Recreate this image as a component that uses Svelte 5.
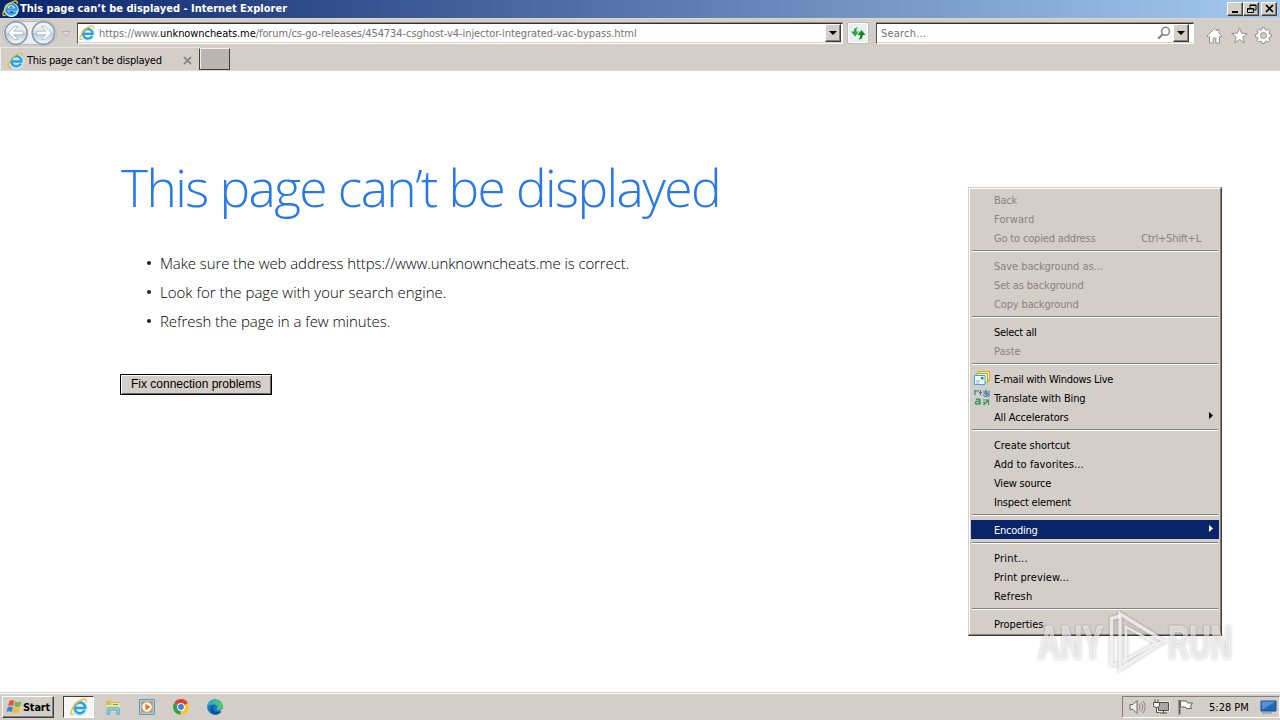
<script lang="ts">
  interface MenuItem {
    label: string;
    tracking?: number;
    disabled?: boolean;
    shortcut?: string;
    icon?: 'mail' | 'translate';
    submenu?: boolean;
    active?: boolean;
  }

  // tracking is extra letter spacing in px
  const groups: MenuItem[][] = [
    [
      { label: 'Back', tracking: -0.25, disabled: true },
      { label: 'Forward', tracking: 0.1, disabled: true },
      { label: 'Go to copied address', tracking: -0.17, disabled: true, shortcut: 'Ctrl+Shift+L' },
    ],
    [
      { label: 'Save background as...', tracking: -0.04, disabled: true },
      { label: 'Set as background', tracking: -0.15, disabled: true },
      { label: 'Copy background', tracking: -0.15, disabled: true },
    ],
    [{ label: 'Select all', tracking: -0.28 }, { label: 'Paste', disabled: true }],
    [
      { label: 'E-mail with Windows Live', tracking: -0.28, icon: 'mail' },
      { label: 'Translate with Bing', tracking: -0.14, icon: 'translate' },
      { label: 'All Accelerators', tracking: -0.16, submenu: true },
    ],
    [
      { label: 'Create shortcut', tracking: -0.06 },
      { label: 'Add to favorites...', tracking: 0.08 },
      { label: 'View source', tracking: -0.2 },
      { label: 'Inspect element', tracking: -0.2 },
    ],
    [{ label: 'Encoding', tracking: -0.25, submenu: true, active: true }],
    [
      { label: 'Print...', tracking: 0.2 },
      { label: 'Print preview...', tracking: 0.1 },
      { label: 'Refresh', tracking: 0.15 },
    ],
    [{ label: 'Properties', tracking: -0.05 }],
  ];

  const tips = [
    { text: 'Make sure the web address https://www.unknowncheats.me is correct.', tracking: -0.1 },
    { text: 'Look for the page with your search engine.', tracking: 0 },
    { text: 'Refresh the page in a few minutes.', tracking: -0.05 },
  ];

  const title = 'This page can’t be displayed';
</script>

{#snippet ie(size: number)}
  <svg width={size} height={size} viewBox="0 0 16 16">
    <path d="M13.6 10.6A5 5 0 1 1 13.8 8.9H5" fill="none" stroke="#c9effc" stroke-width="3.8" />
    <path d="M13.1 10.9A4.800 4.800 0 1 1 13.600 8.900H5" fill="none" stroke="#2d9fe0" stroke-width="2.200" />
    <path d="M3.400 14C1 15.600.2 14 1.500 10.900 3.300 6.600 7.500 2.500 11.600 1.100c2.300-.7 3.200.6 2.500 2.600" fill="none" stroke="#eebd2e" stroke-width="1.300" />
  </svg>
{/snippet}

{#snippet drop()}
  <button class="drop" aria-label="Show list">
    <svg width="8" height="4" viewBox="0 0 8 4"><path d="M0 0h8L4 4z" fill="#000" /></svg>
  </button>
{/snippet}

<div class="desktop">
  <header class="titlebar">
    {@render ie(17)}
    <span class="caption">{title} - Internet Explorer</span>
    <div class="window-buttons">
      <button aria-label="Minimize"><svg width="11" height="10"><path d="M2 8h6" stroke="#000" stroke-width="2" /></svg></button>
      <button aria-label="Restore"><svg width="11" height="10"><path d="M4 4V1h6v5H8M4 1.5h6M1.5 4.5h6v4h-6zM1 5h7" fill="none" stroke="#000" /></svg></button>
      <button class="close" aria-label="Close"><svg width="11" height="10"><path d="M2 1l7 7M9 1L2 8" stroke="#000" stroke-width="1.7" /></svg></button>
    </div>
  </header>

  <div class="toolbar">
    <svg width="77" height="28" viewBox="0 0 77 28">
      <defs>
        <linearGradient id="glass" x2="0" y2="1">
          <stop stop-color="#f9fbfc" />
          <stop offset=".48" stop-color="#dce4eb" />
          <stop offset=".52" stop-color="#b7c9d9" />
          <stop offset="1" stop-color="#f4fdff" />
        </linearGradient>
      </defs>
      <path d="M15 1.5c8 1.500 21 1.500 29 0a12.5 12.5 0 0 1 0 25c-8-1.500-21-1.500-29 0a12.5 12.5 0 0 1 0-25z" fill="#eceeef" stroke="#b5b5b6" />
      <circle cx="16" cy="14" r="11.2" fill="url(#glass)" stroke="#8799aa" stroke-width="1.5" />
      <circle cx="43.5" cy="14" r="11.2" fill="url(#glass)" stroke="#8799aa" stroke-width="1.5" />
      <path d="M8 14l6.500-6.500H18l-4.300 4.700h9.300v3.600h-9.300l4.300 4.700h-3.500z" fill="#fff" stroke="#9cabb9" stroke-width=".7" />
      <path d="M51.500 14L45 7.500h-3.500l4.300 4.700h-9.300v3.600h9.300l-4.300 4.700H45z" fill="#fff" stroke="#9cabb9" stroke-width=".7" />
      <path d="M62 12.5h8l-4 4.5z" fill="#e1dedb" stroke="#aaa5a1" stroke-width=".8" />
    </svg>
    <div class="field address">
      {@render ie(16)}
      <span class="url">https://www.<b>unknowncheats.me</b>/forum/cs-go-releases/454734-csghost-v4-injector-integrated-vac-bypass.html</span>
      {@render drop()}
    </div>
    <button class="reload" aria-label="Refresh">
      <svg width="16" height="15" viewBox="0 0 16 15">
        <path d="M8 1.500C5 1.500 3.800 3 3.800 5.500H1l4 5 4-5H6.300c0-2 .4-2.800 1.700-4z" fill="#2fa63a" />
        <path d="M8.500 13.500c3 0 4.200-1.500 4.200-4.500h2.800l-4-5-4 5h2.700c0 2-.4 3.300-1.700 4.500z" fill="#168522" />
      </svg>
    </button>
    <div class="field search">
      <span class="hint">Search...</span>
      <svg class="lens" width="14" height="14" viewBox="0 0 14 14">
        <circle cx="8.5" cy="5.3" r="4" fill="none" stroke="#858585" stroke-width="1.6" />
        <path d="M5.4 8.4L1.2 12.7" stroke="#858585" stroke-width="2.2" />
      </svg>
      {@render drop()}
    </div>
    <div class="tools">
      <svg width="17" height="17" viewBox="0 0 17 17">
        <path d="M1 9l7.5-7.5L11 4V2.5h2V6l3 3-1.2 1.2-1.3-1V16h-3.700v-5H7.200v5H3.500V9.200l-1.300 1z" fill="#fff" stroke="#969493" />
      </svg>
      <svg width="17" height="17" viewBox="0 0 17 17">
        <path d="M8.5.8l2.1 5.400 5.700.3-4.500 3.600 1.600 5.700-4.900-3.200-4.900 3.200 1.600-5.700L.7 6.500l5.700-.3z" fill="#fff" stroke="#969493" />
      </svg>
      <svg width="17" height="17" viewBox="0 0 17 17">
        <path d="M7.2.7h2.6l.4 2 1.3.6 1.9-1.2L15 3.8l-1.1 1.8.5 1.4 2 .4v2.5l-2 .4-.6 1.4 1.2 1.7-1.8 1.8-1.8-1.2-1.3.6-.4 1.9H7.2l-.4-1.9-1.4-.6-1.7 1.2L2 13.4l1.1-1.7-.6-1.4-2-.4V7.4l2-.4.6-1.4L2 3.8l1.7-1.7 1.7 1.2 1.4-.6z" fill="#fff" stroke="#8f8d8c" />
        <circle cx="8.5" cy="8.5" r="3" fill="#d4cec9" stroke="#969493" />
      </svg>
    </div>
  </div>

  <div class="tabs">
    <div class="tab">
      {@render ie(17)}
      <span class="tab-title">{title}</span>
      <svg class="tab-close" width="9" height="9" viewBox="0 0 9 9"><path d="M1 1l7 7M8 1L1 8" stroke="#8d8884" stroke-width="1.8" /></svg>
    </div>
    <button class="new-tab" aria-label="New tab"></button>
  </div>

  <main>
    <h1>{title}</h1>
    <ul>
      {#each tips as tip}
        <li><span style="letter-spacing: {tip.tracking}px">{tip.text}</span></li>
      {/each}
    </ul>
    <button class="fix">Fix connection problems</button>
  </main>

  <footer class="taskbar">
    <button class="start">
      <svg width="17" height="16" viewBox="0 0 17 16">
        <path d="M3.500 2Q6 .5 8.300 2L7.200 7Q4.500 5.500 2 7z" fill="#e8572a" />
        <path d="M9.300 2.500Q12 4 15.500 2.300L14.200 7.200Q11 8.800 8.200 7.300z" fill="#78b742" />
        <path d="M1.700 8.200Q4.500 6.700 6.900 8.200L5.800 13Q3 11.500.5 13z" fill="#3b84cf" />
        <path d="M7.900 8.600Q11 10 14 8.500L12.700 13.500Q9.500 15 6.700 13.500z" fill="#f3ba2c" />
      </svg>
      <span>Start</span>
    </button>
    <div class="quick">
      <div class="running">{@render ie(18)}</div>
      <svg width="16" height="16" viewBox="0 0 16 16">
        <path d="M1 1.500h5l1 1.500h7.500V13H1z" fill="#dfbb52" />
        <path d="M1.500 4h12l1.500 2v7H1z" fill="#f7e294" />
        <path d="M2 5h4M8 5.500h5" stroke="#6aa761" />
        <path d="M2 15.500V10Q2 8.500 3.500 8.500h9.500Q14.500 8.500 14.500 10v5.500h-3V11.500H5v4z" fill="#80c8e8" stroke="#4f9fc9" stroke-width=".6" />
      </svg>
      <svg width="16" height="16" viewBox="0 0 16 16">
        <path d="M.5.500h15v15H.5z" fill="#9bcdec" stroke="#5a9cc8" />
        <path d="M2.500 2.500h11v11h-11z" fill="#f08519" />
        <circle cx="8" cy="8" r="4.800" fill="#fff" />
        <path d="M6.400 4.800L11.500 8l-5.100 3.200z" fill="#e87511" />
      </svg>
      <svg width="16" height="16" viewBox="0 0 16 16">
        <path d="M8 8L1.200 4A7.800 7.800 0 0 1 14.900 4.200z" fill="#df4034" />
        <path d="M8 8l6.900-3.800A7.800 7.800 0 0 1 7.500 15.800z" fill="#fbc62d" />
        <path d="M8 8L7.500 15.800A7.800 7.800 0 0 1 1.200 4z" fill="#31a24c" />
        <circle cx="8" cy="8" r="3.900" fill="#fff" />
        <circle cx="8" cy="8" r="2.900" fill="#3d7fe8" />
      </svg>
      <svg width="16" height="16" viewBox="0 0 16 16">
        <defs>
          <linearGradient id="wave"><stop stop-color="#1fa7d9" /><stop offset="1" stop-color="#55cf60" /></linearGradient>
        </defs>
        <circle cx="8" cy="8" r="7.800" fill="#1476c6" />
        <path d="M9.300 10c1 1.500 4 2 6.700-.5l-1 3z" fill="#d4cec9" />
        <path d="M.3 7.500C1.500-2 15.500-1.500 15.800 7c0 4-5 4.500-6.500 3 2-2 .7-4.500-2-4.500C4 5.500 1.500 6 .3 7.500z" fill="url(#wave)" />
        <path d="M6 8.500c0 4.500 5 5.500 8.500 3.700C12 17 3.500 17 3.500 10.500 3.500 8 5.500 6 7.500 6 6.500 6.500 6 7.500 6 8.500z" fill="#124f98" />
      </svg>
    </div>
    <div class="tray">
      <svg width="17" height="16" viewBox="0 0 17 16">
        <path d="M1 5.500h3l4-4v13l-4-4H1z" fill="#f2f0ee" stroke="#6d6a68" />
        <path d="M10 5q2 3 0 6M12 3.500q3.400 4.500 0 9M14 2q4.500 6 0 12" fill="none" stroke="#8b8886" />
      </svg>
      <svg width="17" height="16" viewBox="0 0 17 16">
        <path d="M5.500 3.500h10v8h-10z" fill="#aaa7a4" stroke="#f4f2f0" stroke-width="2.500" />
        <path d="M5.500 3.500h10v8h-10zM7 14h7M10.500 11.500V14" fill="#aaa7a4" stroke="#4f4d4b" />
        <path d="M2 .500v3M5 .500v3M.5 3.500h6v3q0 2-3 2t-3-2zM3.500 8.500v5h3" fill="#f1efed" stroke="#4f4d4b" />
      </svg>
      <svg width="17" height="16" viewBox="0 0 17 16">
        <path d="M2.500 1v14.500" stroke="#65615e" stroke-width="2" />
        <path d="M3.500 2h6l1 2h5l-2 3 1 2.500H9.500l-1-1.500h-5z" fill="#fff" stroke="#65615e" />
      </svg>
      <span class="clock">5:28 PM</span>
      <svg class="show-desktop" width="17" height="16" viewBox="0 0 17 16">
        <path d="M1 2h15v10H1z" fill="#2468bd" stroke="#17498e" />
        <path d="M1.500 2.500h14L2 11z" fill="#5291d8" />
        <path d="M2 14h10" stroke="#5f83ac" />
      </svg>
    </div>
  </footer>

  <div class="menu">
    {#each groups as items, g}
      {#if g > 0}<hr />{/if}
      {#each items as item}
        <div class="item" class:disabled={item.disabled} class:active={item.active}>
          <span class="gutter">
            {#if item.icon === 'mail'}
              <svg width="16" height="16" viewBox="0 0 16 16">
                <path d="M4.500.500h11v9h-11z" fill="#fff4cb" stroke="#eda51e" stroke-width="1.300" />
                <path d="M2.500 2.500h11v9h-11z" fill="#e8f3d1" stroke="#9cb63a" />
                <path d="M.5 4.500h10.500v9H.5z" fill="#f0f9ff" stroke="#44a1dd" />
                <path d="M2 10h4M2 12h3" stroke="#8badc7" /><path d="M7 6h2.500v2.500H7z" fill="#347dc6" />
              </svg>
            {:else if item.icon === 'translate'}
              <svg width="17" height="17" viewBox="0 0 17 17">
                <path d="M1 1v5M1 2h4M6.500 1v5M5 3.500h3" fill="none" stroke="#347fa0" stroke-width="1.200" />
                <path d="M9 3h7M12 .500c-.5 3 0 5 1 7M15 4.500c-1 3-5.500 4-5.500 1.500 0-2 6.500-2 6 .5q-.4 1-1.500 1.500" fill="none" stroke="#2873ae" />
                <path d="M2 10.500q4-1.500 4 1V15.500M6 12.500c-4-.5-5 0-4.500 2q1.500 1.500 4.500-.5" fill="none" stroke="#2f9a60" stroke-width="1.500" />
                <path d="M9 11h5.500v5M9.500 16l5-5M9 13.500h3" fill="none" stroke="#399462" stroke-width="1.200" />
              </svg>
            {/if}
          </span>
          <span class="label" style="letter-spacing: {item.tracking ?? 0}px">{item.label}</span>
          {#if item.shortcut}<span class="shortcut">{item.shortcut}</span>{/if}
          {#if item.submenu}
            <svg class="arrow" width="4" height="7" viewBox="0 0 4 7"><path d="M0 0l4 3.500L0 7z" fill="currentColor" /></svg>
          {/if}
        </div>
      {/each}
    {/each}
  </div>

  <svg class="watermark" width="210" height="66" viewBox="0 0 210 66">
    <g fill="#fff" fill-opacity=".55" stroke="#fff" stroke-opacity=".55" stroke-width=".6">
      <text x="5" y="50" textLength="65" lengthAdjust="spacingAndGlyphs">ANY</text>
      <text x="135" y="50" textLength="64" lengthAdjust="spacingAndGlyphs">RUN</text>
    </g>
    <g fill="none" stroke="#fff" stroke-opacity=".75" stroke-width="3.500">
      <path d="M87 7l-8.500 2.500v46h6" />
      <path d="M87 5l44 27-44 28z" />
      <path d="M93 50V18l30 16-30 17" stroke-width="2.500" />
    </g>
  </svg>
</div>

<style>
  :global(body) {
    background: #fff;
    overflow: hidden;
  }

  .desktop {
    display: flex;
    flex-direction: column;
    width: 1280px;
    height: 720px;
    position: relative;
    color: #000;
    font-family: 'DejaVu Sans Condensed', 'DejaVu Sans', sans-serif;
    font-stretch: condensed;
    font-size: 11px;
    white-space: nowrap;
  }

  svg {
    display: block;
    flex-shrink: 0;
  }

  button {
    display: flex;
    align-items: center;
    justify-content: center;
    box-sizing: border-box;
    margin: 0;
    padding: 0;
    font: inherit;
    color: inherit;
    border: 1px solid;
    border-color: #fff #403d3b #403d3b #fff;
    border-radius: 0;
    background: #d4cec9;
    box-shadow: inset -1px -1px #858079;
  }

  .titlebar {
    display: flex;
    align-items: center;
    height: 18px;
    padding: 0 3px 1px 2px;
    box-sizing: border-box;
    color: #fff;
    background: linear-gradient(90deg, #0a246a, #a6caf0);
  }

  .caption {
    margin-left: 1px;
    font-weight: bold;
    letter-spacing: 0.01px;
  }

  .window-buttons {
    display: flex;
    margin-left: auto;
    padding-top: 1px;
  }

  .window-buttons button {
    width: 16px;
    height: 14px;
  }

  .window-buttons .close {
    margin-left: 2px;
  }

  .toolbar {
    display: flex;
    align-items: center;
    height: 29px;
    box-sizing: border-box;
    background: #d4cec9;
    border-top: 1px solid #d7d6c9;
  }

  .field {
    display: flex;
    align-items: center;
    height: 21px;
    box-sizing: border-box;
    background: #fff;
    border: 1px solid;
    border-color: #37302f #fff #fff #57504c;
    box-shadow: 0 -1px #938b86, inset 0 -1px #d4cec9;
  }

  .address {
    width: 766px;
    padding-left: 1px;
    padding-right: 1px;
  }

  .url {
    margin-left: 4px;
    padding-top: 1px;
    letter-spacing: -0.07px;
    color: #747474;
  }

  .url b {
    font-weight: normal;
    color: #000;
  }

  .drop {
    width: 16px;
    height: 18px;
    margin-left: auto;
  }

  .reload {
    width: 22px;
    height: 22px;
    margin: 0 7px 0 4px;
    border-color: #bbb;
    border-radius: 2px;
    background: #e9f0f3;
    box-shadow: inset 0 0 0 1px #fff;
  }

  .search {
    width: 318px;
    box-sizing: border-box;
    padding-left: 4px;
    padding-right: 4px;
  }

  .hint {
    padding-top: 1px;
    letter-spacing: 0.2px;
    color: #747474;
  }

  .lens {
    margin-left: auto;
    margin-right: 2px;
  }

  .search .drop {
    margin-left: 0;
  }

  .tools {
    display: flex;
    gap: 7.5px;
    margin-left: 12px;
    padding-top: 4px;
  }

  .tabs {
    display: flex;
    height: 24px;
    box-sizing: border-box;
    background: #d4cec9;
    border-bottom: 1px solid #dedad6;
  }

  .tab {
    display: flex;
    align-items: center;
    width: 199px;
    box-sizing: border-box;
    padding: 2px 7px 0 6px;
    border-left: 1px solid #f2efed;
    border-top: 1px solid #e8e4e1;
  }

  .tab-title {
    margin-left: 3px;
    letter-spacing: -0.27px;
  }

  .tab-close {
    margin-left: auto;
  }

  .new-tab {
    width: 31px;
    height: 22px;
    margin-top: 1px;
    border-color: #f4f1ee #403d3b #403d3b #403d3b;
    background: #bcb5b1;
    box-shadow: inset 1px 0 #eee;
  }

  main {
    flex: 1;
    padding-left: 121px;
    background: #fff;
    font-family: 'Open Sans', 'Noto Sans', sans-serif;
    font-weight: 300;
    font-stretch: normal;
  }

  h1 {
    width: max-content;
    margin: 81px 0 0;
    font-size: 51.5px;
    line-height: 70px;
    font-weight: 300;
    letter-spacing: -1.6px;
    color: #2778ec;
  }

  ul {
    margin: 26px 0 0;
    padding: 0;
    list-style: none;
  }

  li {
    display: flex;
    align-items: center;
    height: 29px;
    padding-left: 26px;
    font-size: 15px;
  }

  li::before {
    content: '';
    width: 4px;
    height: 4px;
    margin-right: 9px;
    border-radius: 50%;
    background: #222;
  }

  .fix {
    width: 152px;
    height: 21px;
    margin: 39px 0 0 -1px;
    padding-bottom: 2px;
    border-color: #000;
    font-family: 'Liberation Sans', Arial, sans-serif;
    font-size: 12px;
    font-weight: normal;
    box-shadow: inset 1px 1px #fff, inset -1px -1px #6c6864;
  }

  .taskbar {
    display: flex;
    align-items: center;
    height: 28px;
    box-sizing: border-box;
    padding: 1px 0 0 2px;
    background: #d4cec9;
    border-top: 1px solid #d4cec9;
    box-shadow: inset 0 1px #fff;
  }

  .start {
    width: 52px;
    height: 22px;
    font-weight: bold;
    letter-spacing: -0.2px;
  }

  .quick {
    display: flex;
    align-items: center;
    gap: 18px;
    margin-left: 9px;
  }

  .running {
    display: flex;
    align-items: center;
    justify-content: center;
    width: 31px;
    height: 22px;
    margin-right: -7px;
    box-sizing: border-box;
    background: #f8f6f4;
    border: 1px solid;
    border-color: #403d3b #fff #fff #403d3b;
  }

  .tray {
    display: flex;
    align-items: center;
    gap: 7px;
    width: 158px;
    height: 22px;
    margin-left: auto;
    padding-left: 6px;
    box-sizing: border-box;
    border: 1px solid;
    border-color: #858079 #fff #fff #858079;
  }

  .clock {
    margin-left: 8px;
  }

  .show-desktop {
    margin-left: auto;
    margin-right: 2px;
  }

  .menu {
    position: absolute;
    left: 968px;
    top: 187px;
    width: 254px;
    height: 449px;
    box-sizing: border-box;
    padding: 2px;
    border: 1px solid;
    border-color: #d4cec9 #403d3b #403d3b #d4cec9;
    background: #d4cec9;
    box-shadow: inset -1px -1px #858079, inset 1px 1px #fff;
  }

  .menu hr {
    height: 2px;
    box-sizing: border-box;
    margin: 3px 1px 4px;
    border: 0;
    border-top: 1px solid #858079;
    border-bottom: 1px solid #fff;
  }

  .item {
    display: flex;
    align-items: center;
    height: 19px;
    padding-right: 6px;
  }

  .gutter {
    width: 23px;
  }

  .gutter svg {
    margin-left: 3px;
  }

  .item.disabled {
    color: #89847f;
  }

  .item.active {
    color: #fff;
    background: #0a246a;
  }

  .label {
    padding-top: 1px;
  }

  .shortcut {
    margin-left: auto;
    margin-right: 12px;
    padding-top: 1px;
    letter-spacing: -0.2px;
  }

  .arrow {
    margin-left: auto;
    margin-bottom: 3px;
  }

  .watermark {
    position: absolute;
    left: 1033px;
    top: 609px;
    font-family: 'Liberation Sans', sans-serif;
    font-size: 49px;
    font-weight: bold;
    filter: drop-shadow(0 0 1.5px #0006);
  }
</style>
